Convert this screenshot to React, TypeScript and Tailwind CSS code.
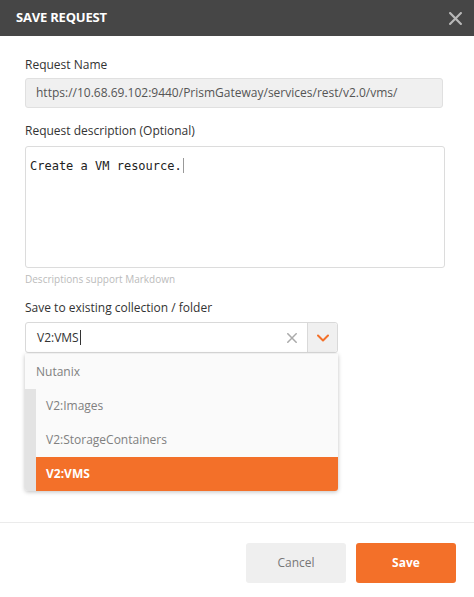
import React from "react";

const font = { fontFamily: '"Open Sans", "Liberation Sans", sans-serif' };

function Chevron() {
  return (
    <svg width="12" height="8" viewBox="0 0 12 8" fill="none">
      <path d="M1 1.5 L6 6.5 L11 1.5" stroke="#f37029" strokeWidth="2" strokeLinecap="round" strokeLinejoin="round" />
    </svg>
  );
}

function Cross({ size, color, width }: { size: number; color: string; width: number }) {
  return (
    <svg width={size} height={size} viewBox="0 0 12 12" fill="none">
      <path d="M1 1 L11 11 M11 1 L1 11" stroke={color} strokeWidth={width} strokeLinecap="square" />
    </svg>
  );
}

export default function App() {
  const items = ["V2:Images", "V2:StorageContainers", "V2:VMS"];
  return (
    <div className="w-[474px] h-[597px] bg-white text-[#333] overflow-hidden" style={font}>
      {/* Header */}
      <div className="h-[36px] bg-[#464646] flex items-center justify-between pl-4 pr-[12px]">
        <span className="text-white text-[13px] font-bold tracking-[-0.2px]">SAVE REQUEST</span>
        <Cross size={13} color="#b8b8b8" width={2} />
      </div>

      {/* Body */}
      <div className="pl-[25px] pt-[20px]">
        <div className="text-[12px] leading-[17px] text-[#333]">Request Name</div>
        <div className="mt-[5px] w-[418px] h-[30px] bg-[#f0f0f0] border border-[#e0e0e0] rounded-[3px] flex items-center pl-[10px] text-[12px] text-[#555]">
          https://10.68.69.102:9440/PrismGateway/services/rest/v2.0/vms/
        </div>

        <div className="mt-[14px] text-[12px] leading-[17px]">Request description (Optional)</div>
        <div className="mt-[7px] w-[420px] h-[122px] border border-[#dcdcdc] rounded-[3px] pl-[4px] pt-[5px]">
          <span className="text-[12px] text-[#222]" style={{ fontFamily: '"DejaVu Sans Mono", "Liberation Mono", monospace' }}>
            Create a VM resource.
          </span>
          <span className="inline-block w-px h-[15px] bg-[#999] align-middle ml-[1px]" />
        </div>
        <div className="mt-[4px] text-[10px] leading-[14px] text-[#bbb]">Descriptions support Markdown</div>

        <div className="mt-[13px] text-[12px] leading-[17px]">Save to existing collection / folder</div>

        <div className="relative mt-[6px] w-[313px]">
          {/* Select */}
          <div className="h-[31px] border border-[#d9d9d9] rounded-[3px] flex items-center bg-white">
            <div className="flex-1 pl-[11px] flex items-center text-[12px] text-[#333]">
              V2:VMS
              <span className="inline-block w-px h-[15px] bg-[#333] ml-px" />
            </div>
            <div className="w-[30px] flex items-center justify-center">
              <Cross size={10} color="#aaa" width={1.8} />
            </div>
            <div className="w-[30px] h-full bg-[#f0f0f0] border-l border-[#d9d9d9] rounded-r-[3px] flex items-center justify-center">
              <Chevron />
            </div>
          </div>

          {/* Field hidden behind the open dropdown */}
          <div className="mt-[22px] h-[11px] flex items-center">
            <span className="block w-[2px] h-[9px] bg-[#555] rounded-full" />
          </div>
          <div className="mt-[8px] w-full h-[28px] border border-[#d9d9d9] rounded-[3px]" />

          {/* Dropdown */}
          <div className="absolute left-0 top-[32px] w-[313px] bg-[#fafafa] rounded-b-[3px] shadow-[0_1px_4px_rgba(0,0,0,0.25)] overflow-hidden">
            <div className="h-[35px] flex items-center pl-[11px] text-[12px] text-[#808080]">Nutanix</div>
            <div className="flex">
              <div className="w-[11px] bg-[#e3e3e3]" />
              <div className="flex-1">
                {items.map((it) => (
                  <div
                    key={it}
                    className={
                      it === "V2:VMS"
                        ? "h-[34px] flex items-center pl-[10px] text-[12px] font-bold text-white bg-[#f37029]"
                        : "h-[34px] flex items-center pl-[10px] text-[12px] text-[#808080]"
                    }
                  >
                    {it}
                  </div>
                ))}
              </div>
            </div>
          </div>
        </div>
      </div>

      {/* Footer */}
      <div className="mt-[100px] border-t border-[#ebebeb] flex justify-end gap-[10px] pr-[18px] pt-[20px]">
        <button className="w-[100px] h-[40px] bg-[#efefef] rounded-[3px] text-[12px] text-[#777]">Cancel</button>
        <button className="w-[100px] h-[40px] bg-[#f37029] rounded-[3px] text-[12px] font-bold text-white">Save</button>
      </div>
    </div>
  );
}
